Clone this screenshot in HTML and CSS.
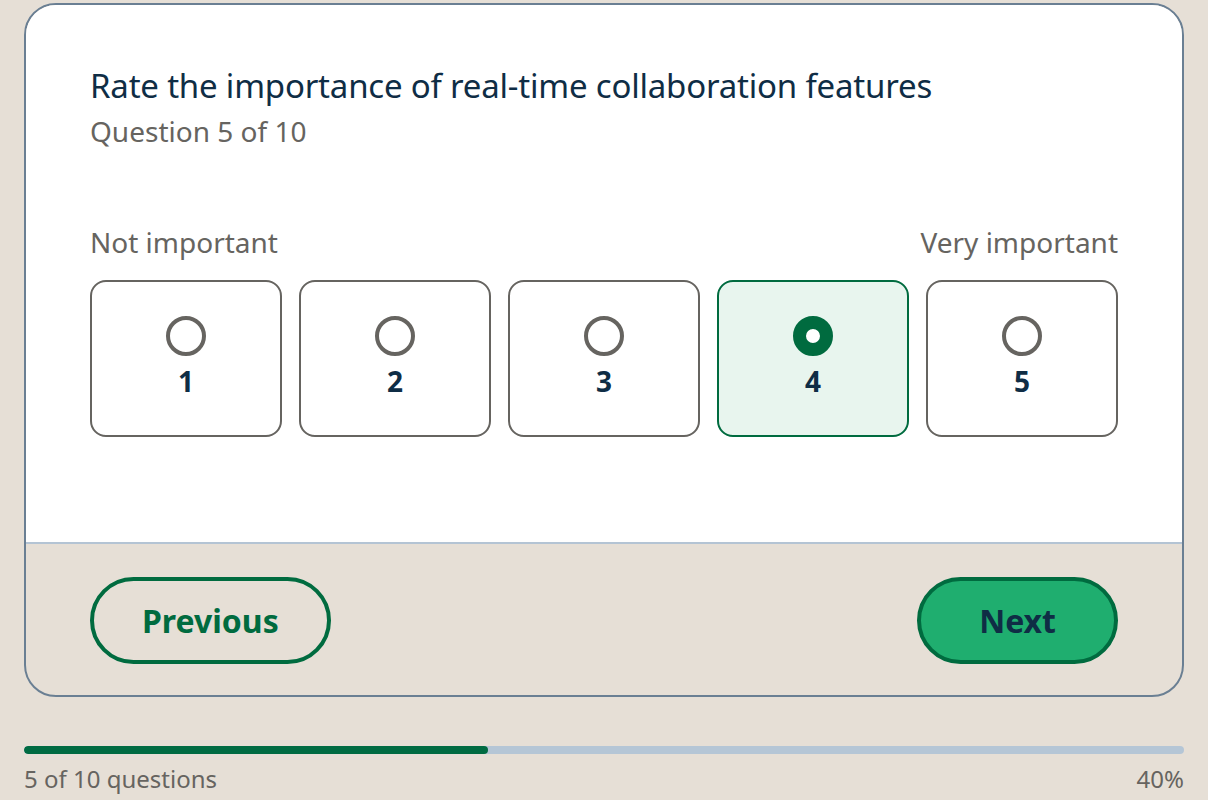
FILE: index.html
```html
<!DOCTYPE html>
<html lang="en">
<head>
    <meta charset="UTF-8">
    <meta name="viewport" content="width=device-width, initial-scale=1.0">
    <title>Survey</title>
    <link rel="stylesheet" href="styles.css">
</head>
<body>

    <!-- Question card -->
    <div class="card">
        <div class="card-body">
            <h1 class="question-title">Rate the importance of real-time collaboration features</h1>
            <p class="question-count">Question 5 of 10</p>

            <div class="scale-labels">
                <span>Not important</span>
                <span>Very important</span>
            </div>

            <div class="scale">
                <label class="scale-option">
                    <span class="radio"></span>
                    <span class="scale-value">1</span>
                </label>
                <label class="scale-option">
                    <span class="radio"></span>
                    <span class="scale-value">2</span>
                </label>
                <label class="scale-option">
                    <span class="radio"></span>
                    <span class="scale-value">3</span>
                </label>
                <label class="scale-option selected">
                    <span class="radio"></span>
                    <span class="scale-value">4</span>
                </label>
                <label class="scale-option">
                    <span class="radio"></span>
                    <span class="scale-value">5</span>
                </label>
            </div>
        </div>

        <!-- Navigation -->
        <div class="card-footer">
            <button class="btn btn-outline">Previous</button>
            <button class="btn btn-primary">Next</button>
        </div>
    </div>

    <!-- Progress -->
    <div class="progress">
        <div class="progress-track">
            <div class="progress-fill" style="width: 40%;"></div>
        </div>
        <div class="progress-info">
            <span>5 of 10 questions</span>
            <span>40%</span>
        </div>
    </div>

</body>
</html>
```

FILE: styles.css
```css
* {
    box-sizing: border-box;
    margin: 0;
    padding: 0;
}

body {
    font-family: "Noto Sans", "Open Sans", sans-serif;
    background-color: #e6dfd6;
    color: #0f2d45;
    padding: 3px 24px 0;
}

.card {
    background-color: #e6dfd6;
    border: 2px solid #6a7f93;
    border-radius: 32px;
    overflow: hidden;
}

.card-body {
    background-color: #ffffff;
    padding: 61px 64px 105px;
}

.question-title {
    font-size: 33px;
    font-weight: 400;
    line-height: 1.2;
    letter-spacing: -0.2px;
    color: #0f2d45;
}

.question-count {
    font-size: 28px;
    line-height: 1.4;
    color: #666460;
    margin-top: 6px;
}

.scale-labels {
    display: flex;
    justify-content: space-between;
    font-size: 28px;
    line-height: 1.4;
    color: #666460;
    margin-top: 72px;
}

.scale {
    display: grid;
    grid-template-columns: repeat(5, 1fr);
    gap: 17px;
    margin-top: 18px;
}

.scale-option {
    display: flex;
    flex-direction: column;
    align-items: center;
    justify-content: center;
    gap: 6px;
    height: 157px;
    border: 2px solid #666460;
    border-radius: 16px;
    background-color: #ffffff;
    cursor: pointer;
}

.scale-option.selected {
    background-color: #e8f5ee;
    border-color: #006b3f;
}

.radio {
    width: 40px;
    height: 40px;
    border: 4px solid #666460;
    border-radius: 50%;
}

.scale-option.selected .radio {
    border: 13px solid #006b3f;
    background-color: #ffffff;
}

.scale-value {
    font-size: 28px;
    font-weight: 700;
    line-height: 1.4;
    color: #0f2d45;
}

.card-footer {
    display: flex;
    justify-content: space-between;
    align-items: center;
    border-top: 2px solid #b4c4d4;
    padding: 33px 64px 31px;
}

.btn {
    font-family: inherit;
    font-size: 32px;
    font-weight: 700;
    height: 87px;
    padding: 0 48px;
    border-radius: 44px;
    border: 4px solid #006b3f;
    cursor: pointer;
}

.btn-outline {
    background-color: transparent;
    color: #006b3f;
}

.btn-primary {
    background-color: #1fae6f;
    color: #0f2d45;
    padding: 0 58px;
}

.progress {
    margin-top: 49px;
}

.progress-track {
    height: 8px;
    background-color: #b5c6d6;
    border-radius: 4px;
    overflow: hidden;
}

.progress-fill {
    height: 100%;
    background-color: #006b42;
    border-radius: 4px;
}

.progress-info {
    display: flex;
    justify-content: space-between;
    font-size: 24px;
    line-height: 1.4;
    color: #666460;
    margin-top: 8px;
}
```
